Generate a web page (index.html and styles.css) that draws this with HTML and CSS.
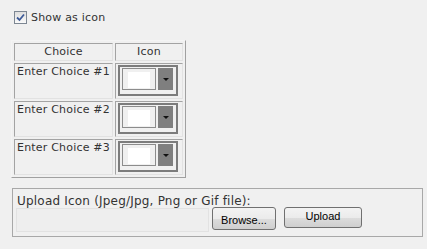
FILE: index.html
```html
<!DOCTYPE html>
<html lang="en">
  <head>
    <meta charset="utf-8" />
    <title>Choice icons</title>
    <link rel="stylesheet" href="styles.css">
  </head>
  <body>
    <div class="page">
      <label class="show-icon">
        <span class="check">
          <svg width="9" height="9" viewBox="0 0 9 9"><path d="M1 4.5 L3.5 7 L8 1.5" fill="none" stroke="#3d5a98" stroke-width="1.8"/></svg>
        </span>
        Show as icon
      </label>

      <table class="choices">
        <tr>
          <th class="col-choice">Choice</th>
          <th class="col-icon">Icon</th>
        </tr>
        <tr>
          <td class="choice">Enter Choice #1</td>
          <td class="icon-cell">
            <div class="picker"><span class="preview"><span class="swatch"></span></span><span class="drop"></span></div>
          </td>
        </tr>
        <tr>
          <td class="choice">Enter Choice #2</td>
          <td class="icon-cell">
            <div class="picker"><span class="preview"><span class="swatch"></span></span><span class="drop"></span></div>
          </td>
        </tr>
        <tr>
          <td class="choice">Enter Choice #3</td>
          <td class="icon-cell">
            <div class="picker"><span class="preview"><span class="swatch"></span></span><span class="drop"></span></div>
          </td>
        </tr>
      </table>

      <div class="upload">
        <div class="upload-label">Upload Icon (Jpeg/Jpg, Png or Gif file):</div>
        <div class="upload-row">
          <span class="file-path"></span>
          <button class="btn browse">Browse...</button>
          <button class="btn send">Upload</button>
        </div>
      </div>
    </div>
  </body>
</html>
```

FILE: styles.css
```css
body {
  margin: 0;
  background: #f0f0f0;
  font-family: "DejaVu Sans", Verdana, sans-serif;
  font-size: 11px;
  letter-spacing: 0.2px;
  color: #333;
}
.page {
  padding: 11px 4px 0 11px;
}
.show-icon {
  display: flex;
  align-items: center;
  gap: 4px;
  height: 13px;
  margin-left: 3px;
  line-height: 13px;
}
.check {
  box-sizing: border-box;
  width: 13px;
  height: 13px;
  border: 1px solid #7d8793;
  background: linear-gradient(#dedede, #fafafa);
  display: flex;
  align-items: center;
  justify-content: center;
}
.check svg {
  display: block;
}

/* choices table */
.choices {
  margin-top: 16px;
  border-collapse: separate;
  border-spacing: 2px;
  border: 1px solid;
  border-color: #f4f4f4 #a0a0a0 #a0a0a0 #f4f4f4;
}
.choices th,
.choices td {
  border: 1px solid;
  border-color: #a3a3a3 #e2e2e2 #e2e2e2 #a3a3a3;
  padding: 1px 2px;
}
.choices th {
  font-weight: normal;
  line-height: 14px;
  text-align: center;
}
.col-choice {
  width: 93px;
}
.col-icon {
  width: 62px;
}
.choice {
  vertical-align: top;
  line-height: 14px;
  padding-top: 4px;
  height: 32px;
}
.icon-cell {
  vertical-align: top;
  padding: 3px 0 0 2px;
}
.picker {
  box-sizing: border-box;
  width: 60px;
  height: 31px;
  border: 2px solid #7c7c7c;
  padding: 1px 3px 3px 2px;
  display: flex;
  gap: 2px;
}
.preview {
  box-sizing: border-box;
  width: 34px;
  height: 22px;
  border: 1px solid #8c8c8c;
  padding: 3px 5px 1px 5px;
}
.swatch {
  display: block;
  width: 22px;
  height: 16px;
  background: #fff;
}
.drop {
  position: relative;
  width: 15px;
  height: 22px;
  background: #7f7f7f;
}
.drop::after {
  content: "";
  position: absolute;
  left: 5px;
  top: 10px;
  border-left: 3px solid transparent;
  border-right: 3px solid transparent;
  border-top: 3px solid #111;
}

/* upload box */
.upload {
  margin: 10px 0 0 1px;
  width: 411px;
  box-sizing: border-box;
  border: 1px solid #a8a8a8;
  padding: 5px 0 4px 0;
}
.upload-label {
  padding-left: 4px;
  font-size: 12px;
  line-height: 14px;
}
.upload-row {
  display: flex;
  align-items: flex-start;
  margin-top: -1px;
}
.file-path {
  box-sizing: border-box;
  width: 193px;
  height: 24px;
  margin: 1px 0 0 3px;
  border: 1px solid #e2e2e2;
  background: #eeeeee;
}
.btn {
  box-sizing: border-box;
  height: 23px;
  border: 1px solid #707070;
  border-radius: 3px;
  background: linear-gradient(#f3f3f3 0%, #ebebeb 50%, #dddddd 51%, #cfcfcf 100%);
  font-family: "Liberation Sans", Arial, sans-serif;
  font-size: 11px;
  letter-spacing: 0;
  color: #000;
  padding: 0;
}
.browse {
  width: 64px;
  margin-left: 3px;
  padding-top: 3px;
}
.send {
  width: 78px;
  height: 21px;
  margin-left: 8px;
  padding-bottom: 3px;
}
```
